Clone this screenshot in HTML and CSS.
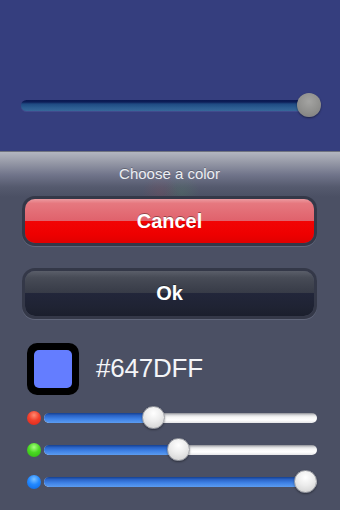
FILE: index.html
```html
<!DOCTYPE html>
<html>
<head>
<meta charset="utf-8">
<link rel="stylesheet" href="styles.css">
</head>
<body>
<div class="screen">
  <div class="preview">
    <div class="big-slider">
      <div class="big-track"></div>
      <div class="big-thumb"></div>
    </div>
  </div>
  <div class="sheet">
    <div class="sheet-title">Choose a color</div>
    <div class="actions">
      <button class="btn btn-cancel">Cancel</button>
      <button class="btn btn-ok">Ok</button>
    </div>
    <div class="color-row">
      <div class="swatch"><div class="swatch-fill"></div></div>
      <div class="hex">#647DFF</div>
    </div>
    <div class="channels">
      <div class="channel">
        <span class="dot dot-red"></span>
        <div class="track">
          <div class="fill" style="width: calc(11.5px + 250px * 0.392)"></div>
          <div class="thumb" style="left: calc(250px * 0.392)"></div>
        </div>
      </div>
      <div class="channel">
        <span class="dot dot-green"></span>
        <div class="track">
          <div class="fill" style="width: calc(11.5px + 250px * 0.490)"></div>
          <div class="thumb" style="left: calc(250px * 0.490)"></div>
        </div>
      </div>
      <div class="channel">
        <span class="dot dot-blue"></span>
        <div class="track">
          <div class="fill" style="width: calc(11.5px + 250px * 1)"></div>
          <div class="thumb" style="left: calc(250px * 1)"></div>
        </div>
      </div>
    </div>
  </div>
</div>
</body>
</html>
```

FILE: styles.css
```css
* { box-sizing: border-box; }
html, body {
  margin: 0;
  padding: 0;
  width: 340px;
  height: 510px;
  overflow: hidden;
  background: #4b5064;
  font-family: "Liberation Sans", Arial, Helvetica, sans-serif;
}
.screen {
  width: 340px;
  height: 510px;
  display: flex;
  flex-direction: column;
}
.preview {
  height: 151px;
  background: #353e7e;
  padding: 93px 20px 0 21px;
}
.big-slider {
  position: relative;
  height: 24px;
  display: flex;
  align-items: center;
}
.big-track {
  flex: 1;
  height: 11px;
  border-radius: 6px;
  background: linear-gradient(#0a1850 0, #0d1e58 2px, #1f4a82 4px, #2c5d92 70%, #37679a 100%);
  box-shadow: 0 1px 0 rgba(90,100,170,0.35);
}
.big-thumb {
  position: absolute;
  right: -1px;
  top: 0;
  width: 24px;
  height: 24px;
  border-radius: 50%;
  background: radial-gradient(circle at 50% 35%, #a4a4a2 0, #8f8f8d 55%, #7c7c7b 100%);
  box-shadow: 0 1px 2px rgba(0,0,0,0.45);
}
.sheet {
  flex: 1;
  background:
    radial-gradient(circle at 160px 42px, rgba(170,70,80,0.16) 0, rgba(170,70,80,0) 18px),
    radial-gradient(circle at 182px 42px, rgba(80,160,90,0.16) 0, rgba(80,160,90,0) 18px),
    linear-gradient(#2c3040 0, #b3b6c0 1px, #9a9daa 10px, #70748a 24px, #555a6e 36px, #4b5064 46px, #4b5064 100%);
  padding: 0 26px 0 25px;
}
.sheet-title {
  padding-top: 14px;
  height: 48px;
  font-size: 15px;
  line-height: 18px;
  text-align: center;
  color: #eceef2;
  text-shadow: 0 -1px 0 rgba(0,0,0,0.25);
}
.actions {
  display: flex;
  flex-direction: column;
  gap: 28px;
}
.btn {
  display: block;
  width: 100%;
  height: 44px;
  border: 0;
  border-radius: 10px;
  font-family: "Liberation Sans", Arial, Helvetica, sans-serif;
  font-weight: bold;
  font-size: 20px;
  color: #ffffff;
  text-shadow: 0 -1px 0 rgba(0,0,0,0.35);
  padding: 0;
}
.btn-cancel {
  background: linear-gradient(#ec9aa0 0, #e6787f 10%, #e0626c 49%, #f20404 50%, #ee0000 80%, #e00000 100%);
  box-shadow: 0 0 0 3px #343848, 0 1px 0 3px rgba(120,126,146,0.5);
}
.btn-ok {
  height: 45px;
  background: linear-gradient(#5a5e69 0, #474b56 15%, #373b47 49%, #22263a 50%, #1f2333 80%, #1b1f2d 100%);
  box-shadow: 0 0 0 3px #343848, 0 1px 0 3px rgba(120,126,146,0.5);
}
.color-row {
  margin-top: 27px;
  margin-left: 2px;
  display: flex;
  align-items: center;
  gap: 17px;
}
.swatch {
  width: 52px;
  height: 52px;
  background: #000000;
  border-radius: 10px;
  padding: 7px;
}
.swatch-fill {
  width: 100%;
  height: 100%;
  border-radius: 5px;
  background: #647dff;
}
.hex {
  font-size: 26px;
  color: #f4f5f8;
  letter-spacing: -0.2px;
  padding-bottom: 2px;
}
.channels {
  margin-top: 7px;
  margin-left: 2px;
  margin-right: -3px;
  display: flex;
  flex-direction: column;
}
.channel {
  height: 32px;
  display: flex;
  align-items: center;
  gap: 3px;
}
.dot {
  width: 14px;
  height: 14px;
  border-radius: 50%;
  flex: none;
}
.dot-red {
  background: radial-gradient(circle at 50% 30%, #ff8a70 0, #f2402c 45%, #d82418 100%);
}
.dot-green {
  background: radial-gradient(circle at 50% 30%, #a8ff80 0, #4ad822 45%, #2fb410 100%);
}
.dot-blue {
  background: radial-gradient(circle at 50% 30%, #7ac0ff 0, #2288ff 45%, #0b66e0 100%);
}
.track {
  position: relative;
  flex: 1;
  height: 10px;
  border-radius: 5px;
  background: linear-gradient(#8c8e94 0, #d6d7da 2px, #f6f6f6 40%, #ffffff 70%, #e4e4e6 100%);
}
.fill {
  height: 100%;
  border-radius: 5px 0 0 5px;
  background: linear-gradient(#16408f 0, #2a63c6 25%, #3f82e6 60%, #5c9cf0 100%);
}
.thumb {
  position: absolute;
  top: -7px;
  width: 23px;
  height: 23px;
  border-radius: 50%;
  background: radial-gradient(circle at 50% 30%, #ffffff 0, #ececec 45%, #cdcdcd 100%);
  border: 1px solid #9c9ea4;
  box-shadow: 0 1px 2px rgba(0,0,0,0.35);
}
```
